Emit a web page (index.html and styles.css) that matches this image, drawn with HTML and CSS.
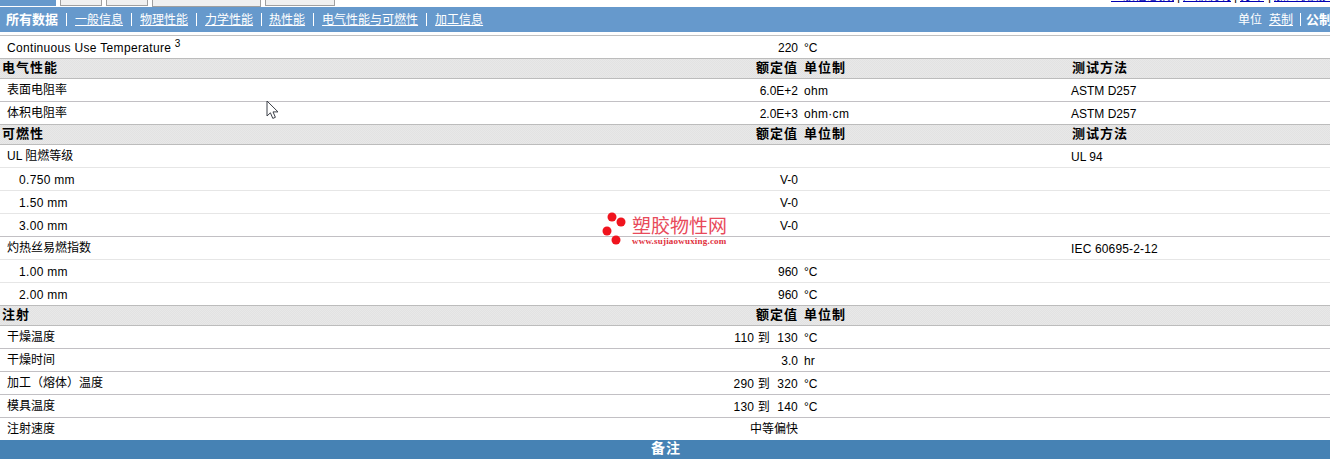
FILE: index.html
```html
<!DOCTYPE html>
<html lang="zh">
<head>
<meta charset="utf-8">
<title>所有数据</title>
<link rel="stylesheet" href="styles.css">
</head>
<body>
<div class="top">
  <div class="tabs">
    <span class="tab tab-on"></span>
    <span class="tab tab-a"></span>
    <span class="tab tab-a"></span>
    <span class="tab tab-b"></span>
    <span class="tab tab-c"></span>
  </div>
  <div class="toplinks">
    <a href="#" class="tl-a">一般信息摘要</a><span>|</span>
    <a href="#" class="tl-b">产品说明</a><span>|</span>
    <a href="#" class="tl-c">打印</a><span>|</span>
    <a href="#" class="tl-d">加入收藏夹</a>
  </div>
</div>
<nav class="nav">
  <b class="nav-cur">所有数据</b><i></i>
  <a href="#">一般信息</a><i></i>
  <a href="#">物理性能</a><i></i>
  <a href="#">力学性能</a><i class="nav-tight"></i>
  <a href="#">热性能</a><i></i>
  <a href="#">电气性能与可燃性</a><i></i>
  <a href="#">加工信息</a>
  <div class="units"><span class="units-label">单位</span><a href="#">英制</a><i></i><b>公制</b></div>
</nav>
<div class="sheet">
  <div class="row"><span class="n lat wide">Continuous Use Temperature <sup>3</sup></span><span class="v lat">220</span><span class="u lat">°C</span><span></span></div>
  <div class="row head"><span>电气性能</span><span class="v">额定值</span><span class="u">单位制</span><span>测试方法</span></div>
  <div class="row"><span class="n">表面电阻率</span><span class="v lat">6.0E+2</span><span class="u lat wide">ohm</span><span class="lat">ASTM D257</span></div>
  <div class="row"><span class="n">体积电阻率</span><span class="v lat">2.0E+3</span><span class="u lat wide">ohm·cm</span><span class="lat">ASTM D257</span></div>
  <div class="row head"><span>可燃性</span><span class="v">额定值</span><span class="u">单位制</span><span>测试方法</span></div>
  <div class="row lite"><span class="n">UL 阻燃等级</span><span class="v"></span><span class="u"></span><span class="lat">UL 94</span></div>
  <div class="row lite"><span class="n sub lat wide">0.750 mm</span><span class="v lat">V-0</span><span class="u"></span><span></span></div>
  <div class="row lite"><span class="n sub lat wide">1.50 mm</span><span class="v lat">V-0</span><span class="u"></span><span></span></div>
  <div class="row"><span class="n sub lat wide">3.00 mm</span><span class="v lat">V-0</span><span class="u"></span><span></span></div>
  <div class="row lite"><span class="n">灼热丝易燃指数</span><span class="v"></span><span class="u"></span><span class="lat iec">IEC 60695-2-12</span></div>
  <div class="row lite"><span class="n sub lat wide">1.00 mm</span><span class="v lat">960</span><span class="u lat">°C</span><span></span></div>
  <div class="row"><span class="n sub lat wide">2.00 mm</span><span class="v lat">960</span><span class="u lat">°C</span><span></span></div>
  <div class="row head"><span>注射</span><span class="v">额定值</span><span class="u">单位制</span><span></span></div>
  <div class="row"><span class="n">干燥温度</span><span class="v lat range">110 到&nbsp; 130</span><span class="u lat">°C</span><span></span></div>
  <div class="row"><span class="n">干燥时间</span><span class="v lat">3.0</span><span class="u lat">hr</span><span></span></div>
  <div class="row"><span class="n">加工（熔体）温度</span><span class="v lat range">290 到&nbsp; 320</span><span class="u lat">°C</span><span></span></div>
  <div class="row"><span class="n">模具温度</span><span class="v lat range">130 到&nbsp; 140</span><span class="u lat">°C</span><span></span></div>
  <div class="row"><span class="n">注射速度</span><span class="v">中等偏快</span><span class="u"></span><span></span></div>
</div>
<div class="foot">备注</div>

<div class="mark">
  <svg class="mark-dots" width="26" height="33" viewBox="0 0 26 33"><circle cx="11" cy="5" r="4.5"/><circle cx="20" cy="10" r="4.5"/><circle cx="6" cy="19" r="4.5"/><circle cx="15" cy="28" r="4.5"/></svg>
  <div class="mark-text"><div class="mark-cn">塑胶物性网</div><div class="mark-url">www.sujiaowuxing.com</div></div>
</div>
<svg class="cursor" width="14" height="20" viewBox="0 0 14 20"><path d="M1 1v15l3.4-3.2 2.4 5.6 2.6-1.1-2.4-5.4h5z" fill="#fff" stroke="#3c4048" stroke-width="1"/></svg>
</body>
</html>
```
FILE: styles.css
```css
html, body { margin: 0; padding: 0; background: #fff; }
body { width: 1330px; height: 460px; overflow: hidden; position: relative; font: 12px/1 "Liberation Sans", "Noto Sans CJK SC", sans-serif; color: #000; }
a { color: inherit; }

.top { height: 7px; display: flex; justify-content: space-between; overflow: hidden; }
.tabs { display: flex; gap: 4px; align-items: flex-start; }
.tab { display: block; box-sizing: border-box; height: 6px; background: #f0f0f0; border: 1px solid #a0a0a0; border-top: 0; }
.tab-on { width: 56px; background: #6699cc; border: 0; }
.tab-a { width: 42px; }
.tab-b { width: 109px; height: 7px; }
.tab-c { width: 70px; }
.toplinks { display: flex; gap: 3px; margin-top: -11px; height: 14px; line-height: 14px; color: #0000b0; white-space: nowrap; }
.toplinks span { color: #000; width: 3px; text-align: center; }
.tl-a { width: 63px; overflow: hidden; }
.tl-b { width: 48px; overflow: hidden; }
.tl-c { width: 25px; overflow: hidden; }
.tl-d { width: 56px; overflow: hidden; }

.nav { height: 25px; background: #6699cc; color: #fff; display: flex; align-items: center; padding-left: 6px; white-space: nowrap; }
.nav i { display: block; width: 1px; height: 13px; background: #fff; margin: 0 8px; }
.nav i.nav-tight { margin-right: 7px; }
.nav-cur { font-size: 13px; }
.units { margin-left: auto; display: flex; align-items: center; }
.units-label { margin-right: 7px; }
.units i { margin: 0 5px 0 7px; }
.units b { width: 24px; overflow: hidden; font-size: 13px; }

.sheet { margin-top: 3px; border-top: 1px solid #c0c0c0; }
.row { display: grid; grid-template-columns: 620px 178px 273px 1fr; box-sizing: border-box; height: 23px; border-bottom: 1px solid #c2c0c4; align-items: center; white-space: nowrap; }
.lite { border-bottom-color: #e6e6e6; }
.n { padding-left: 7px; }
.sub { padding-left: 19px; }
.v { text-align: right; }
.u { padding-left: 6px; }
.lat { padding-top: 2px; }
.wide { letter-spacing: .32px; }
.iec { letter-spacing: .15px; }
.range { letter-spacing: .25px; }
sup { font-size: 10px; line-height: 0; vertical-align: 5px; }

.head { height: 21px; margin-top: -1px; padding-bottom: 2px; background: repeating-conic-gradient(#e2e2e2 0 25%, #e8e8e8 0 50%) 0 0 / 2px 2px; border-top: 1px solid #bcbcbc; border-bottom: 1px solid #bcbcbc; font-weight: 700; font-size: 13px; letter-spacing: 1px; }
.head > span:first-child { padding-left: 2px; }
.head > span:last-child { padding-left: 1px; }

.foot { height: 19px; margin-top: -1px; padding-left: 2px; position: relative; background: #4682b4; color: #fff; font-weight: 700; font-size: 14px; line-height: 17px; text-align: center; letter-spacing: 1px; }

.mark { position: absolute; left: 601px; top: 212px; display: flex; gap: 5px; align-items: flex-start; }
.mark-dots { display: block; fill: #f0141e; }
.mark-text { padding-top: 5px; }
.mark-cn { color: #e84a5a; font-size: 19px; line-height: 20px; }
.mark-url { color: #e0303c; font: 700 9px/9px "Liberation Serif", serif; letter-spacing: .2px; }

.cursor { position: absolute; left: 266px; top: 100px; }
```
